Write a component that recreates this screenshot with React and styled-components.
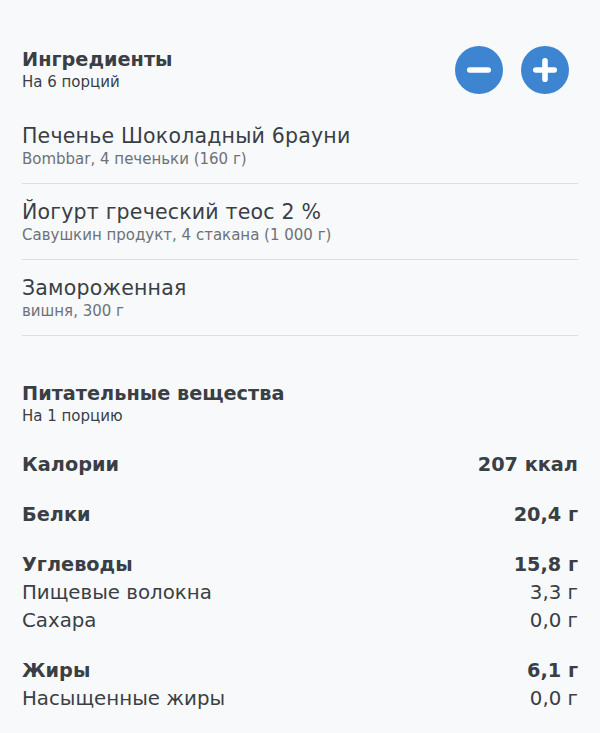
import React from "react";
import styled, { createGlobalStyle } from "styled-components";

const Global = createGlobalStyle`
  body {
    margin: 0;
    background: #f8f9fb;
    font-family: "DejaVu Sans", "Noto Sans", sans-serif;
    color: #3a3f45;
  }
`;

const Page = styled.div`
  padding: 46px 22px 20px;
`;

const Header = styled.div`
  display: flex;
  align-items: center;
  justify-content: space-between;
`;

const Title = styled.div`
  font-size: 19.3px;
  font-weight: 700;
  line-height: 24px;
`;

const Caption = styled.div`
  font-size: 15px;
  line-height: 20px;
`;

const Controls = styled.div`
  display: flex;
  gap: 18px;
  margin-right: 9px;
`;

const RoundButton = styled.button`
  width: 48px;
  height: 48px;
  border: none;
  border-radius: 50%;
  background: #3d85d0;
  display: flex;
  align-items: center;
  justify-content: center;
  padding: 0;
  cursor: pointer;
`;

const List = styled.div`
  margin-top: 14px;
`;

const Item = styled.div`
  padding: 15px 0 14px;
  border-bottom: 1px solid #dcdee1;
`;

const ItemName = styled.div`
  font-size: 20.5px;
  letter-spacing: 0.2px;
  line-height: 26px;
`;

const ItemMeta = styled.div`
  font-size: 15px;
  line-height: 20px;
  color: #6d7276;
`;

const Section = styled.div`
  margin-top: 46px;
`;

const Groups = styled.div`
  margin-top: 25px;
  display: flex;
  flex-direction: column;
  gap: 22px;
`;

const Row = styled.div`
  display: flex;
  justify-content: space-between;
  font-size: ${(p) => (p.$bold ? "19.3px" : "19.8px")};
  line-height: 28px;
  font-weight: ${(p) => (p.$bold ? 700 : 400)};
`;

const Icon = ({ plus }) => (
  <svg width="24" height="24" viewBox="0 0 24 24">
    <line x1="2.8" y1="12" x2="21.2" y2="12" stroke="#fff" strokeWidth="5.6" strokeLinecap="round" />
    {plus && <line x1="12" y1="2.8" x2="12" y2="21.2" stroke="#fff" strokeWidth="5.6" strokeLinecap="round" />}
  </svg>
);

const ingredients = [
  { name: "Печенье Шоколадный 6рауни", meta: "Bombbar, 4 печеньки (160 г)" },
  { name: "Йогурт греческий теос 2 %", meta: "Савушкин продукт, 4 стакана (1 000 г)" },
  { name: "Замороженная", meta: "вишня, 300 г" },
];

const nutrients = [
  [["Калории", "207 ккал"]],
  [["Белки", "20,4 г"]],
  [["Углеводы", "15,8 г"], ["Пищевые волокна", "3,3 г"], ["Сахара", "0,0 г"]],
  [["Жиры", "6,1 г"], ["Насыщенные жиры", "0,0 г"]],
];

export default function App() {
  return (
    <Page>
      <Global />
      <Header>
        <div>
          <Title>Ингредиенты</Title>
          <Caption>На 6 порций</Caption>
        </div>
        <Controls>
          <RoundButton aria-label="Меньше"><Icon /></RoundButton>
          <RoundButton aria-label="Больше"><Icon plus /></RoundButton>
        </Controls>
      </Header>
      <List>
        {ingredients.map((it) => (
          <Item key={it.name}>
            <ItemName>{it.name}</ItemName>
            <ItemMeta>{it.meta}</ItemMeta>
          </Item>
        ))}
      </List>
      <Section>
        <Title>Питательные вещества</Title>
        <Caption>На 1 порцию</Caption>
        <Groups>
          {nutrients.map((group, i) => (
            <div key={i}>
              {group.map(([label, value], j) => (
                <Row key={label} $bold={j === 0}>
                  <span>{label}</span>
                  <span>{value}</span>
                </Row>
              ))}
            </div>
          ))}
        </Groups>
      </Section>
    </Page>
  );
}
